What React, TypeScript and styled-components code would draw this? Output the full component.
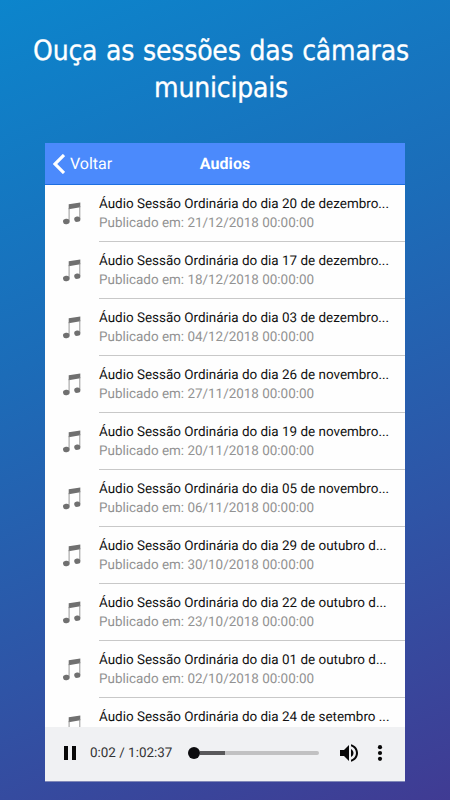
import React from "react";
import styled, { createGlobalStyle } from "styled-components";

const GlobalStyle = createGlobalStyle`
  * { box-sizing: border-box; }
  body { margin: 0; text-rendering: geometricPrecision; }
`;

const Page = styled.main`
  width: 450px;
  height: 800px;
  overflow: hidden;
  display: flex;
  flex-direction: column;
  align-items: center;
  background: linear-gradient(157deg, #0c85cc 0%, #1c6cb8 38%, #2f54a6 70%, #403b93 100%);
  font-family: Roboto, "Liberation Sans", sans-serif;
`;

const Headline = styled.h1`
  margin: 0;
  width: 450px;
  height: 143px;
  padding: 32px 8px 0 0;
  text-align: center;
  color: #fff;
  font: 400 28px/37px "DejaVu Sans Condensed", "DejaVu Sans", sans-serif;
  font-stretch: condensed;
  letter-spacing: -0.2px;
  word-spacing: 1px;
  -webkit-text-stroke: 0.3px #fff;
`;

const Screen = styled.section`
  width: 360px;
  height: 639px;
  display: flex;
  flex-direction: column;
  background: #fefefe;
  border-bottom: 1px solid #8088b8;
`;

const NavBar = styled.header`
  flex: none;
  height: 42px;
  display: grid;
  grid-template-columns: 1fr auto 1fr;
  align-items: center;
  padding: 1px 8px 0;
  background: #4b8afc;
  border-bottom: 1px solid #1d6ee0;
  color: #fff;
`;

const BackButton = styled.div`
  display: flex;
  align-items: center;
  gap: 5px;
  font-size: 16px;
  line-height: 20px;
`;

const ScreenTitle = styled.h2`
  margin: 0;
  font-size: 16px;
  line-height: 20px;
  font-weight: 700;
  letter-spacing: 0.1px;
`;

const AudioList = styled.ul`
  flex: 1;
  min-height: 0;
  margin: 0;
  padding: 0;
  overflow: hidden;
  list-style: none;
`;

const AudioRow = styled.li`
  display: flex;
  height: 57.06px;
  padding-left: 17px;
`;

const NoteIcon = styled.svg`
  flex: none;
  width: 20px;
  height: 24px;
  margin: 17px 17px 0 0;
  fill: #707070;
`;

const RowText = styled.div`
  flex: 1;
  padding-top: 9.75px;
  border-bottom: 1px solid #c8c8c8;
  white-space: nowrap;
`;

const RowTitle = styled.div`
  color: #111;
  font-size: 13.45px;
  line-height: 19px;
`;

const RowDate = styled.div`
  color: #929292;
  font-size: 13.45px;
  line-height: 19px;
`;

const Player = styled.footer`
  flex: none;
  height: 54px;
  display: flex;
  align-items: center;
  padding: 0 16px 2px 19px;
  background: #f0f1f3;
  color: #333;
`;

const PauseIcon = styled.svg`
  flex: none;
  width: 12px;
  height: 14px;
  fill: #080808;
`;

const Time = styled.span`
  width: 98px;
  margin-left: 14px;
  padding-top: 2px;
  font-size: 13.45px;
  line-height: 18px;
  white-space: nowrap;
`;

const Track = styled.div`
  display: flex;
  align-items: center;
  width: 131px;
`;

const Thumb = styled.span`
  width: 12px;
  height: 12px;
  border-radius: 50%;
  background: #0c0c0e;
`;

const Bar = styled.span<{ $kind: "loaded" | "rest" }>`
  height: 4px;
  ${({ $kind }) =>
    $kind === "loaded"
      ? "width: 25px; background: #59595b;"
      : "flex: 1; background: #c1c1c2; border-radius: 0 2px 2px 0;"}
`;

const VolumeIcon = styled.svg`
  width: 18px;
  height: 18px;
  margin-left: 21px;
`;

const MoreIcon = styled.svg`
  width: 6px;
  height: 16px;
  margin-left: 19px;
  fill: #080808;
`;

const audios = [
  { day: "20 de dezembro...", published: "21/12/2018" },
  { day: "17 de dezembro...", published: "18/12/2018" },
  { day: "03 de dezembro...", published: "04/12/2018" },
  { day: "26 de novembro...", published: "27/11/2018" },
  { day: "19 de novembro...", published: "20/11/2018" },
  { day: "05 de novembro...", published: "06/11/2018" },
  { day: "29 de outubro d...", published: "30/10/2018" },
  { day: "22 de outubro d...", published: "23/10/2018" },
  { day: "01 de outubro d...", published: "02/10/2018" },
  { day: "24 de setembro ..." },
];

const MusicNote = () => (
  <NoteIcon viewBox="0 0 20 24">
    <path d="M6.700 2.300 18.300.4V5.200L6.700 7.200Z" />
    <path d="M7.100 6v13.500M17.800 4v13" fill="none" stroke="#8c8c8c" strokeWidth="0.900" />
    <ellipse cx="4.300" cy="19.500" rx="3.300" ry="2.700" transform="rotate(-10 4.300 19.500)" />
    <ellipse cx="15.300" cy="17.200" rx="3.100" ry="2.700" transform="rotate(-10 15.300 17.200)" />
  </NoteIcon>
);

export default function App() {
  return (
    <>
      <GlobalStyle />
      <Page>
        <Headline>
          Ouça as sessões das câmaras
          <br />
          municipais
        </Headline>
        <Screen>
          <NavBar>
            <BackButton>
              <svg width="12" height="20" viewBox="0 0 12 20" fill="none" stroke="#fff" strokeWidth="3.200">
                <path d="M11 1 1.900 10l9.100 9" />
              </svg>
              Voltar
            </BackButton>
            <ScreenTitle>Audios</ScreenTitle>
          </NavBar>
          <AudioList>
            {audios.map(({ day, published }) => (
              <AudioRow key={day}>
                <MusicNote />
                <RowText>
                  <RowTitle>Áudio Sessão Ordinária do dia {day}</RowTitle>
                  {published && <RowDate>Publicado em: {published} 00:00:00</RowDate>}
                </RowText>
              </AudioRow>
            ))}
          </AudioList>
          <Player>
            <PauseIcon viewBox="0 0 12 14">
              <path d="M0 0h4v14H0zM8 0h4v14H8z" />
            </PauseIcon>
            <Time>0:02 / 1:02:37</Time>
            <Track>
              <Thumb />
              <Bar $kind="loaded" />
              <Bar $kind="rest" />
            </Track>
            <VolumeIcon viewBox="3 3 18 18" fill="#080808">
              <path d="M3 9v6h4l5 5V4L7 9H3zm13.500 3c0-1.770-1.020-3.290-2.500-4.030v8.050c1.480-.73 2.500-2.250 2.500-4.020zM14 3.230v2.060c2.890.86 5 3.540 5 6.710s-2.110 5.850-5 6.710v2.060c4.010-.91 7-4.490 7-8.770s-2.990-7.860-7-8.770z" />
            </VolumeIcon>
            <MoreIcon viewBox="0 0 6 16">
              <circle cx="3" cy="2.200" r="2.100" />
              <circle cx="3" cy="8" r="2.100" />
              <circle cx="3" cy="13.800" r="2.100" />
            </MoreIcon>
          </Player>
        </Screen>
      </Page>
    </>
  );
}
